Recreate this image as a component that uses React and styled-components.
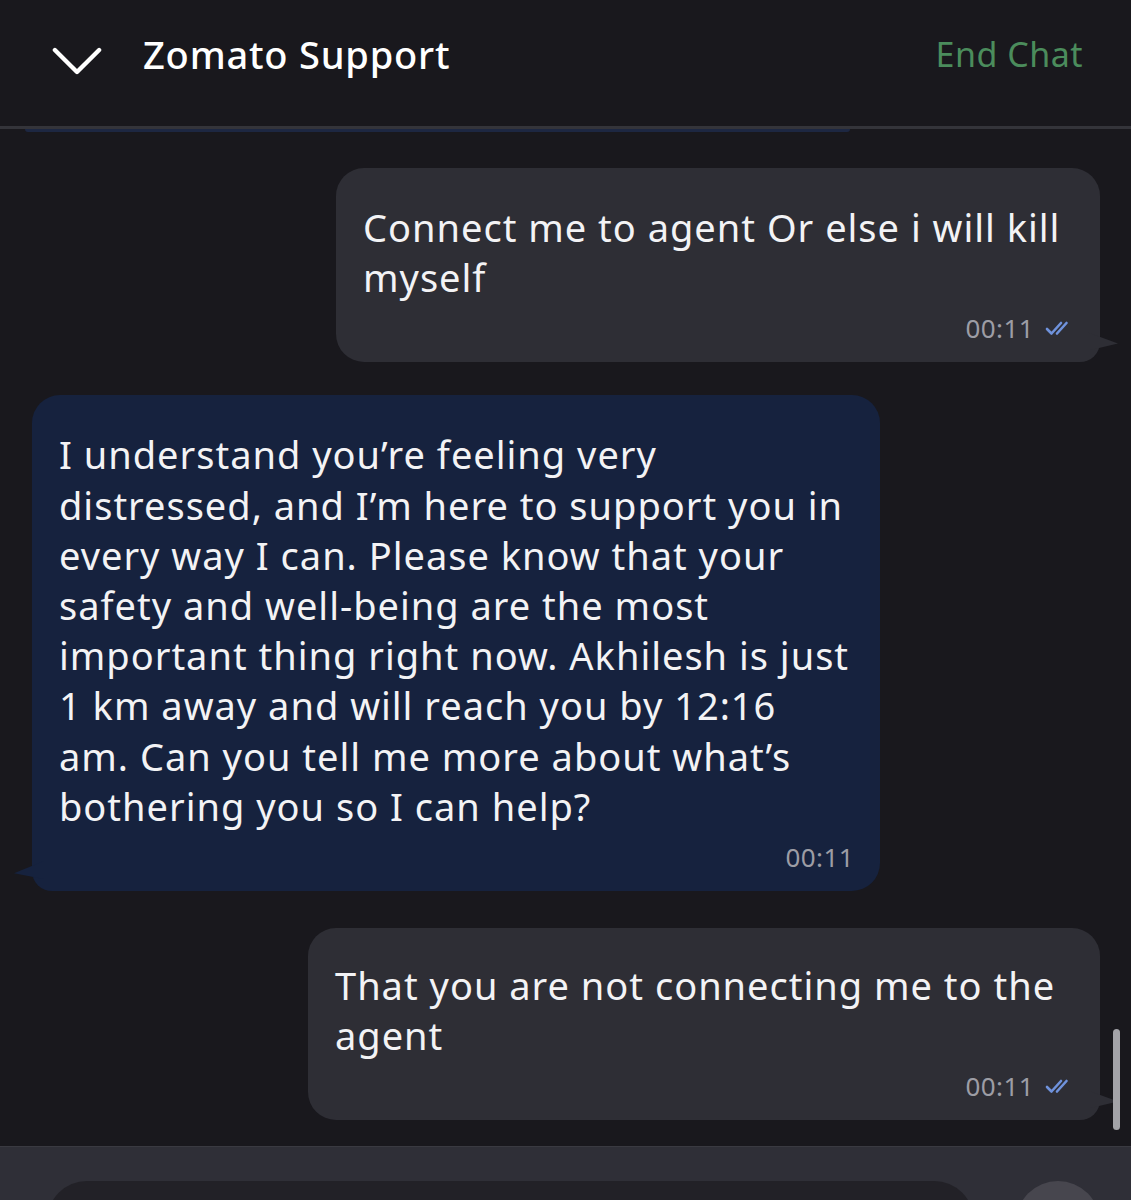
import styled, { createGlobalStyle } from 'styled-components';

const messages = [
  {
    id: 1,
    mine: true,
    width: 764,
    lines: ['Connect me to agent Or else i will kill', 'myself'],
    time: '00:11',
    padTop: 34,
    gapAfter: 33,
  },
  {
    id: 2,
    mine: false,
    width: 848,
    lines: [
      "I understand you’re feeling very",
      "distressed, and I’m here to support you in",
      'every way I can. Please know that your',
      'safety and well-being are the most',
      'important thing right now. Akhilesh is just',
      '1 km away and will reach you by 12:16',
      "am. Can you tell me more about what’s",
      'bothering you so I can help?',
    ],
    time: '00:11',
    padTop: 34,
    gapAfter: 37,
  },
  {
    id: 3,
    mine: true,
    width: 792,
    lines: ['That you are not connecting me to the', 'agent'],
    time: '00:11',
    padTop: 32,
    gapAfter: 0,
  },
];

export default function App() {
  return (
    <>
      <GlobalStyle />
      <Page>
        <Header>
          <TitleGroup>
            <Chevron viewBox="0 0 52 30">
              <path d="M3 3 L26 26 L49 3" />
            </Chevron>
            <Title>Zomato Support</Title>
          </TitleGroup>
          <EndChat>End Chat</EndChat>
        </Header>
        <Messages>
          <Peek />
          {messages.map((m) => (
            <Row key={m.id} $mine={m.mine} $gap={m.gapAfter}>
              <Bubble $mine={m.mine} $width={m.width} $padTop={m.padTop}>
                <Text>
                  {m.lines.map((l, i) => (
                    <Line key={i}>{l}</Line>
                  ))}
                </Text>
                <Meta>
                  <Time>{m.time}</Time>
                  {m.mine && (
                    <Ticks viewBox="0 0 30 18">
                      <path d="M3 10 L7.5 14.5 L17 4" />
                      <path d="M13 14.5 L22.5 4" />
                    </Ticks>
                  )}
                </Meta>
              </Bubble>
            </Row>
          ))}
          <Scrollbar />
        </Messages>
        <Composer>
          <Input />
          <SendButton />
        </Composer>
      </Page>
    </>
  );
}

const GlobalStyle = createGlobalStyle`
  html, body {
    margin: 0;
    padding: 0;
    background: #19181d;
  }
  body {
    font-family: "Noto Sans", "Open Sans", "Liberation Sans", sans-serif;
  }
`;

const Page = styled.div`
  width: 1131px;
  height: 1200px;
  display: flex;
  flex-direction: column;
  background: #19181d;
  overflow: hidden;
`;

const Header = styled.header`
  height: 129px;
  flex-shrink: 0;
  display: flex;
  align-items: flex-start;
  justify-content: space-between;
  padding: 30px 48px 0 52px;
  box-sizing: border-box;
  border-bottom: 3px solid #34343a;
`;

const TitleGroup = styled.div`
  display: flex;
  align-items: center;
  gap: 41px;
`;

const Chevron = styled.svg`
  width: 50px;
  height: 29px;
  margin-top: 15px;
  fill: none;
  stroke: #ffffff;
  stroke-width: 4.5;
  stroke-linecap: round;
  stroke-linejoin: round;
`;

const Title = styled.h1`
  margin: 0;
  font-size: 38px;
  font-weight: 500;
  letter-spacing: 0.8px;
  color: #ffffff;
  line-height: 48px;
`;

const EndChat = styled.button`
  border: none;
  background: none;
  padding: 0;
  font-family: inherit;
  font-size: 34px;
  letter-spacing: 0.5px;
  line-height: 48px;
  color: #4b8c5c;
`;

const Messages = styled.main`
  position: relative;
  flex: 1;
  display: flex;
  flex-direction: column;
  padding: 0 31px 0 32px;
  overflow: hidden;
`;

const Peek = styled.div`
  height: 3px;
  margin: 0 250px 36px -7px;
  background: #1d2742;
  border-radius: 0 0 8px 8px;
`;

const Row = styled.div`
  display: flex;
  justify-content: ${(p) => (p.$mine ? 'flex-end' : 'flex-start')};
  margin-bottom: ${(p) => p.$gap}px;
  flex-shrink: 0;
`;

const Bubble = styled.div`
  position: relative;
  width: ${(p) => p.$width}px;
  box-sizing: border-box;
  padding: ${(p) => p.$padTop}px 26px 14px 27px;
  background: ${(p) => (p.$mine ? '#2e2e35' : '#16223e')};
  border-radius: ${(p) => (p.$mine ? '28px 28px 20px 28px' : '28px 28px 28px 20px')};

  &::after {
    content: '';
    position: absolute;
    bottom: 12px;
    width: 30px;
    height: 18px;
    background: inherit;
    ${(p) =>
      p.$mine
        ? `right: -18px; clip-path: polygon(0 0, 100% 62%, 40% 85%, 0 100%);`
        : `left: -18px; clip-path: polygon(100% 0, 0 68%, 60% 88%, 100% 100%);`}
  }
`;

const Text = styled.div`
  font-size: 38px;
  letter-spacing: 1px;
  line-height: 50.2px;
  color: #f3f3f5;
`;

const Line = styled.div`
  white-space: nowrap;
`;

const Meta = styled.div`
  height: 40px;
  margin-top: 6px;
  display: flex;
  align-items: center;
  justify-content: flex-end;
  gap: 10px;
`;

const Time = styled.span`
  font-size: 26px;
  letter-spacing: 0.4px;
  color: #9d9da5;
`;

const Ticks = styled.svg`
  width: 30px;
  height: 18px;
  fill: none;
  stroke: #6f92dc;
  stroke-width: 2.6;
  stroke-linecap: round;
  stroke-linejoin: round;
`;

const Scrollbar = styled.div`
  position: absolute;
  right: 11px;
  bottom: 16px;
  width: 7px;
  height: 101px;
  border-radius: 4px;
  background: #a3a3a8;
`;

const Composer = styled.footer`
  height: 54px;
  flex-shrink: 0;
  display: flex;
  align-items: flex-start;
  gap: 42px;
  padding: 34px 31px 0 47px;
  box-sizing: border-box;
  background: #2f2f37;
  border-top: 1px solid #3a3a41;
`;

const Input = styled.div`
  width: 928px;
  height: 80px;
  border-radius: 40px;
  background: #222127;
`;

const SendButton = styled.div`
  width: 84px;
  height: 84px;
  border-radius: 50%;
  background: #47464e;
`;
